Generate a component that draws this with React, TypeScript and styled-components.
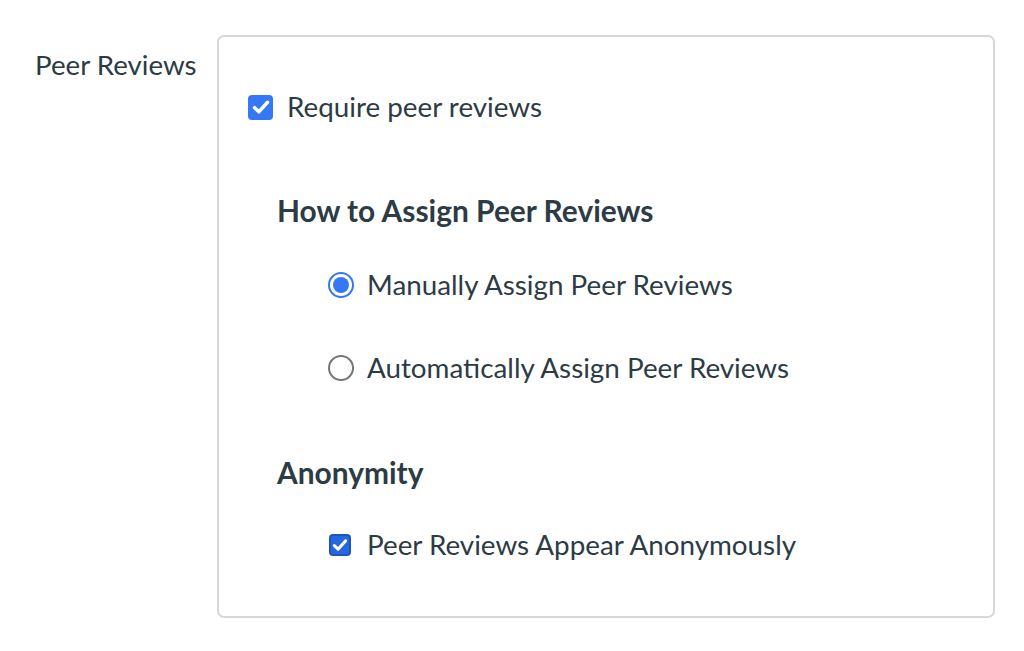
import styled, { createGlobalStyle } from 'styled-components';

const GlobalStyle = createGlobalStyle`
  html, body {
    margin: 0;
    padding: 0;
    background: #ffffff;
  }
  body {
    font-family: Lato, "Helvetica Neue", Arial, sans-serif;
    color: #2d3b45;
  }
`;

const Page = styled.div`
  display: flex;
  align-items: flex-start;
  padding: 35px 0 0 35px;
`;

const FieldLabel = styled.div`
  width: 182px;
  padding-top: 13px;
  font-size: 27.7px;
  line-height: 34px;
`;

const Panel = styled.div`
  border: 2px solid #d7d7d7;
  border-radius: 7px;
  padding: 53px 30px 0 29px;
  box-sizing: border-box;
  width: 778px;
  height: 583px;
`;

const Option = styled.label<{ $indent?: number; $gap?: number }>`
  display: flex;
  align-items: center;
  gap: ${(p) => p.$gap ?? 13}px;
  margin-left: ${(p) => p.$indent ?? 0}px;
  height: 34px;
  font-size: 27.8px;
  line-height: 34px;
  cursor: pointer;
`;

const Box = styled.span<{ $size: number; $dark?: boolean }>`
  display: inline-flex;
  align-items: center;
  justify-content: center;
  width: ${(p) => p.$size}px;
  height: ${(p) => p.$size}px;
  border-radius: 4px;
  box-sizing: border-box;
  background: ${(p) => (p.$dark ? '#2767dd' : '#3478f6')};
  border: ${(p) => (p.$dark ? '2px solid #1e55bd' : 'none')};
  flex-shrink: 0;
`;

const Radio = styled.span<{ $checked?: boolean }>`
  display: inline-flex;
  align-items: center;
  justify-content: center;
  width: 26px;
  height: 26px;
  border-radius: 50%;
  box-sizing: border-box;
  border: 2px solid ${(p) => (p.$checked ? '#3478f6' : '#73777a')};
  flex-shrink: 0;
  &::after {
    content: '';
    display: ${(p) => (p.$checked ? 'block' : 'none')};
    width: 16px;
    height: 16px;
    border-radius: 50%;
    background: #3478f6;
  }
`;

const Section = styled.section`
  margin-left: 29px;
`;

const Heading = styled.h3<{ $top: number }>`
  margin: ${(p) => p.$top}px 0 0 0;
  font-size: 29.9px;
  font-weight: 700;
  line-height: 34px;
`;

const OptionList = styled.div<{ $top: number }>`
  display: flex;
  flex-direction: column;
  gap: 49px;
  margin-top: ${(p) => p.$top}px;
`;

function Check({ size, dark }: { size: number; dark?: boolean }) {
  const s = size * 0.72;
  return (
    <Box $size={size} $dark={dark}>
      <svg width={s} height={s} viewBox="0 0 16 16">
        <path
          d="M2.3 8.6 L6.1 12.3 L13.8 3.8"
          fill="none"
          stroke="#ffffff"
          strokeWidth="3.1"
          strokeLinecap="round"
          strokeLinejoin="round"
        />
      </svg>
    </Box>
  );
}

export default function App() {
  return (
    <>
      <GlobalStyle />
      <Page>
        <FieldLabel>Peer Reviews</FieldLabel>
        <Panel>
          <Option $gap={14}>
            <Check size={25} />
            Require peer reviews
          </Option>
          <Section>
            <Heading $top={69}>How to Assign Peer Reviews</Heading>
            <OptionList $top={41}>
              <Option $indent={51}>
                <Radio $checked />
                Manually Assign Peer Reviews
              </Option>
              <Option $indent={51}>
                <Radio />
                Automatically Assign Peer Reviews
              </Option>
            </OptionList>
            <Heading $top={70}>Anonymity</Heading>
            <OptionList $top={39}>
              <Option $indent={52} $gap={16}>
                <Check size={22} dark />
                Peer Reviews Appear Anonymously
              </Option>
            </OptionList>
          </Section>
        </Panel>
      </Page>
    </>
  );
}
